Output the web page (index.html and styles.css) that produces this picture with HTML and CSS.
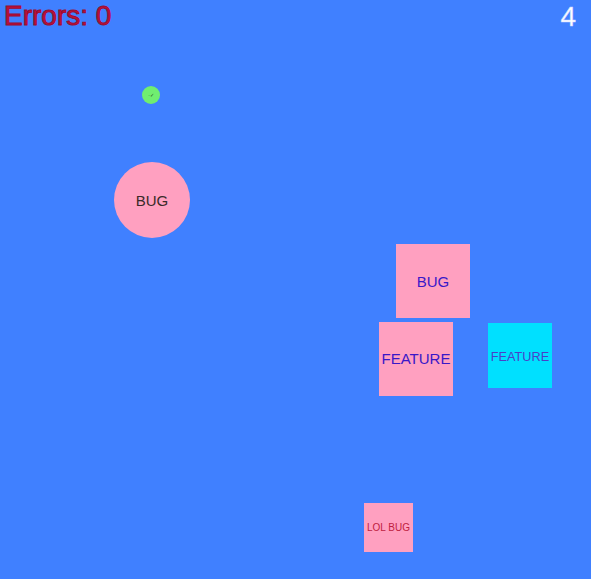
FILE: index.html
```html
<!DOCTYPE html>
<html>
<head>
<meta charset="utf-8">
<link rel="stylesheet" href="styles.css">
</head>
<body>
<div class="stage">
  <div class="hud">
    <div class="errors">Errors: 0</div>
    <div class="score">4</div>
  </div>
  <div class="item player"><span>·✓</span></div>
  <div class="item bug-circle"><span>BUG</span></div>
  <div class="item box bug-box"><span>BUG</span></div>
  <div class="item box feature-pink"><span>FEATURE</span></div>
  <div class="item box feature-cyan"><span>FEATURE</span></div>
  <div class="item box lol-bug"><span>LOL BUG</span></div>
</div>
</body>
</html>
```
FILE: styles.css
```css
html, body {
  margin: 0;
  padding: 0;
}
body {
  background: #4080ff;
  font-family: "Liberation Sans", Arial, sans-serif;
}
.stage {
  position: relative;
  width: 591px;
  height: 579px;
  overflow: hidden;
  background: #4080ff;
}
.hud {
  display: flex;
  justify-content: space-between;
  align-items: flex-start;
  padding: 0 15px 0 4px;
  height: 34px;
}
.errors {
  font-size: 28px;
  line-height: 32px;
  color: #c0103c;
  -webkit-text-stroke: 1px #9a0c30;
}
.score {
  font-size: 28px;
  line-height: 34px;
  color: #ffffff;
  -webkit-text-stroke: 0.5px #c8d4ff;
}
.item {
  position: absolute;
  display: flex;
  align-items: center;
  justify-content: center;
  box-sizing: border-box;
}
.player {
  left: 142px;
  top: 86px;
  width: 18px;
  height: 18px;
  border-radius: 50%;
  background: #70ee70;
  font-size: 5px;
  color: #205020;
}
.bug-circle {
  left: 114px;
  top: 162px;
  width: 76px;
  height: 76px;
  border-radius: 50%;
  background: #ffa0c0;
  font-size: 15px;
  color: #3a2a28;
}
.box {
  background: #ffa0c0;
}
.bug-box {
  left: 396px;
  top: 244px;
  width: 74px;
  height: 74px;
  font-size: 15px;
  color: #3a18c8;
}
.feature-pink {
  left: 379px;
  top: 322px;
  width: 74px;
  height: 74px;
  font-size: 15px;
  color: #3a18c8;
  padding-bottom: 1px;
}
.feature-cyan {
  left: 488px;
  top: 323px;
  width: 64px;
  height: 65px;
  background: #00e0ff;
  font-size: 12.7px;
  color: #4a40c8;
  padding-top: 2px;
}
.lol-bug {
  left: 364px;
  top: 503px;
  width: 49px;
  height: 49px;
  font-size: 10px;
  color: #c02040;
}
```
